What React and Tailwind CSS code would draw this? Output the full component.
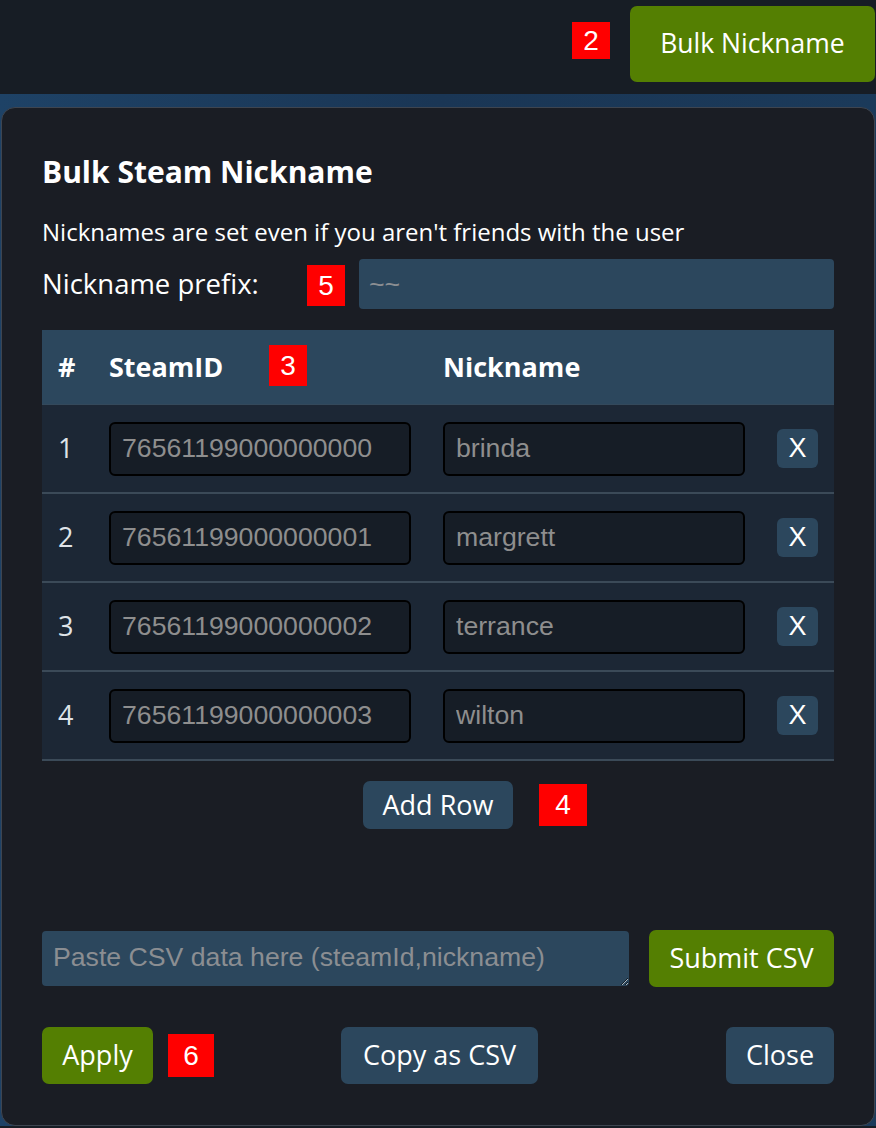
const rows = [
  { id: "76561199000000000", name: "brinda" },
  { id: "76561199000000001", name: "margrett" },
  { id: "76561199000000002", name: "terrance" },
  { id: "76561199000000003", name: "wilton" },
];

const sans = "font-['Open_Sans',sans-serif]";
const arial = "font-['Liberation_Sans',Arial,sans-serif]";

function Badge({ n, className }) {
  return (
    <div
      className={`absolute flex items-center justify-center bg-[#ff0000] text-white text-[28px] leading-none ${arial} ${className}`}
    >
      {n}
    </div>
  );
}

export default function App() {
  return (
    <div className={`w-[876px] h-[1128px] overflow-hidden bg-[#171d25] text-white ${sans}`}>
      {/* top bar */}
      <div className="relative h-[94px] flex justify-end items-start pt-[6px] pr-[1px]">
        <Badge n="2" className="left-[572px] top-[22px] w-[38px] h-[37px]" />
        <button className="w-[245px] h-[76px] rounded-[7px] bg-[#547f02] text-[26.5px] text-white">
          Bulk Nickname
        </button>
      </div>

      {/* page area behind the dialog */}
      <div className="bg-gradient-to-r from-[#1e4266] via-[#1a3655] to-[#1b3a5a] pt-[13px] px-[1px]">
        <div className="relative bg-[#1a1d24] border border-[#3e4550] rounded-[14px] px-[40px] pt-[40px] pb-[40px] h-[1019px]">
          <h2 className="text-[30px] font-bold leading-[40px] mt-[4px]">Bulk Steam Nickname</h2>

          <p className="text-[24px] leading-[32px] mt-[24px]">
            Nicknames are set even if you aren't friends with the user
          </p>

          <div className="relative flex items-center mt-[11px] h-[50px]">
            <label className="text-[27.5px] w-[317px]">Nickname prefix:</label>
            <input
              placeholder="~~"
              className={`flex-1 h-[50px] rounded-[4px] bg-[#2c475d] px-[10px] text-[26.67px] outline-none placeholder:text-[#8b8e92] ${arial}`}
            />
            <Badge n="5" className="left-[265px] top-[6px] w-[38px] h-[41px]" />
          </div>

          {/* table */}
          <div className="mt-[21px]">
            <div className="relative grid grid-cols-[67px_334px_334px_57px] items-center h-[75px] bg-[#2c475d] text-[27px] font-bold border-b border-[#34495b]">
              <div className="pl-[16px]">#</div>
              <div>SteamID</div>
              <div>Nickname</div>
              <div />
              <Badge n="3" className="left-[227px] top-[15px] w-[38px] h-[41px] font-normal" />
            </div>
            {rows.map((r, i) => (
              <div
                key={r.id}
                className="grid grid-cols-[67px_334px_334px_57px] items-center h-[89px] bg-[#1c2735] border-b-2 border-[#3b4a58]"
              >
                <div className="pl-[16px] text-[27px] text-[#dfe3e8]">{i + 1}</div>
                <div>
                  <input
                    placeholder={r.id}
                    className={`w-[302px] h-[54px] rounded-[6px] border-2 border-black bg-[#161d26] px-[11px] text-[26.67px] outline-none placeholder:text-[#8e8e8e] ${arial}`}
                  />
                </div>
                <div>
                  <input
                    placeholder={r.name}
                    className={`w-[302px] h-[54px] rounded-[6px] border-2 border-black bg-[#161d26] px-[11px] text-[26.67px] outline-none placeholder:text-[#8e8e8e] ${arial}`}
                  />
                </div>
                <div className="flex justify-start">
                  <button className={`w-[41px] h-[39px] rounded-[6px] bg-[#2c475d] text-[27px] leading-none ${arial}`}>
                    X
                  </button>
                </div>
              </div>
            ))}
          </div>

          <div className="relative flex justify-center mt-[20px]">
            <button className="w-[150px] h-[48px] rounded-[7px] bg-[#2c475d] text-[27px]">Add Row</button>
            <Badge n="4" className="left-[497px] top-[3px] w-[48px] h-[42px]" />
          </div>

          {/* csv */}
          <div className="flex items-center gap-[20px] mt-[101px]">
            <textarea
              placeholder="Paste CSV data here (steamId,nickname)"
              className={`flex-1 h-[55px] rounded-[4px] bg-[#2c475d] px-[11px] py-[9px] text-[26.67px] leading-[34px] outline-none resize-y placeholder:text-[#8b8e92] ${arial}`}
            />
            <button className="w-[185px] h-[57px] rounded-[7px] bg-[#547f02] text-[27px]">Submit CSV</button>
          </div>

          <div className="relative flex justify-between mt-[40px]">
            <button className="w-[111px] h-[57px] rounded-[7px] bg-[#547f02] text-[27px]">Apply</button>
            <button className="w-[197px] h-[57px] rounded-[7px] bg-[#2c475d] text-[27px]">Copy as CSV</button>
            <button className="w-[108px] h-[57px] rounded-[7px] bg-[#2c475d] text-[27px]">Close</button>
            <Badge n="6" className="left-[126px] top-[7px] w-[46px] h-[43px]" />
          </div>
        </div>
      </div>
    </div>
  );
}
